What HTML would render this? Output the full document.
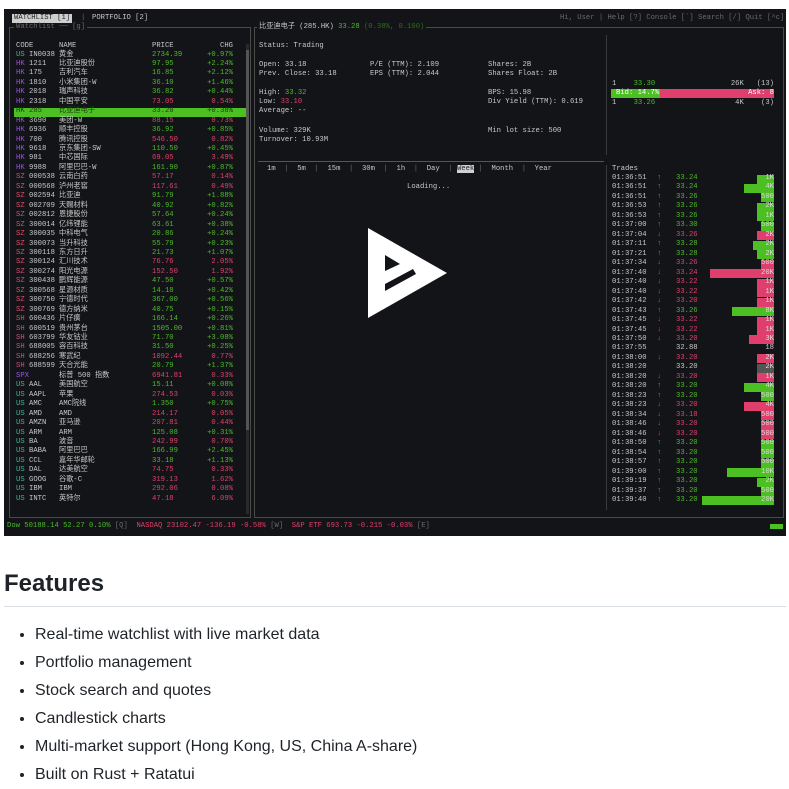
<!DOCTYPE html>
<html><head><meta charset="utf-8"><style>
*{margin:0;padding:0;box-sizing:border-box}
body{width:789px;height:788px;background:#fff;position:relative;overflow:hidden;font-family:"Liberation Sans",sans-serif}
#t{position:absolute;left:4px;top:9px;width:782px;height:527px;background:#131417}
.a{position:absolute;white-space:pre;font-family:"Liberation Mono","Noto Sans CJK SC",monospace;font-size:7.2px;line-height:9px;color:#c9c9c9}
.g{color:#4cbb2a}.r{color:#e0406a}.d{color:#6a6a6a}
.us{color:#3ab79a}.hk{color:#9a52e6}.sz{color:#e04a6c}.sh{color:#d0507a}.spx{color:#9a52f0}
.bx{position:absolute;border:1px solid #4a4a4a}
.ln{position:absolute;background:#3a3a3a}
.rt{text-align:right}
</style></head><body>
<div id="t"></div>
<div class="a" style="left:12px;top:14px;background:#cfcfcf;color:#222;padding:0 2px">WATCHLIST [1]</div>
<div class="a d" style="left:81px;top:14px">|</div>
<div class="a" style="left:92px;top:14px">PORTFOLIO [2]</div>
<div class="a d" style="left:560px;top:14px;width:222px;text-align:right">Hi, User | Help [?] Console [`] Search [/] Quit [^c]</div>
<div class="bx" style="left:9px;top:27px;width:242px;height:491px"></div>
<div class="a d" style="left:14px;top:23px;background:#131417;padding:0 2px">Watchlist ── [g]</div>
<div class="ln" style="left:246px;top:44px;width:3px;height:470px;background:#2a2a2a"></div>
<div class="ln" style="left:246px;top:50px;width:3px;height:380px;background:#555"></div>
<div class="a" style="left:16px;top:42px">CODE</div><div class="a" style="left:59px;top:42px">NAME</div><div class="a" style="left:152px;top:42px">PRICE</div><div class="a rt" style="left:190px;top:42px;width:43px">CHG</div>
<div style="position:absolute;left:14px;top:108px;width:232px;height:9px;background:#4cbf22"></div>
<div id="wl"></div>
<div class="bx" style="left:254px;top:27px;width:530px;height:491px"></div>
<div class="a" style="left:257px;top:23px;background:#131417;padding:0 2px">比亚迪电子 (285.HK) <span class="g">33.28</span> <span style="color:#2f6e1c">(0.38%, 0.100)</span></div>
<div class="ln" style="left:606px;top:35px;width:1px;height:120px"></div>
<div class="ln" style="left:606px;top:165px;width:1px;height:345px"></div>
<div class="ln" style="left:258px;top:161px;width:346px;height:1px;background:#555"></div>
<div class="a" style="left:259px;top:42px">Status: Trading</div>
<div class="a" style="left:259px;top:61px">Open: 33.18<br>Prev. Close: 33.18</div>
<div class="a" style="left:370px;top:61px">P/E (TTM): 2.109<br>EPS (TTM): 2.044</div>
<div class="a" style="left:488px;top:61px">Shares: 2B<br>Shares Float: 2B</div>
<div class="a" style="left:259px;top:89px">High: <span class="g">33.32</span><br>Low: <span class="r">33.10</span><br>Average: --</div>
<div class="a" style="left:488px;top:89px">BPS: 15.98<br>Div Yield (TTM): 0.619</div>
<div class="a" style="left:259px;top:127px">Volume: 329K<br>Turnover: 10.93M</div>
<div class="a" style="left:488px;top:127px">Min lot size: 500</div>
<div class="a" style="left:612px;top:80px">1    <span class="g">33.30</span></div><div class="a rt" style="left:700px;top:80px;width:74px">26K   (13)</div>
<div style="position:absolute;left:611px;top:89px;width:49px;height:9px;background:#4cbf22"></div>
<div style="position:absolute;left:660px;top:89px;width:114px;height:9px;background:#e03e6c"></div>
<div class="a" style="left:616px;top:89px;color:#fff">Bid: 14.7%</div><div class="a rt" style="left:700px;top:89px;width:74px;color:#fff">Ask: 8</div>
<div class="a" style="left:612px;top:99px">1    <span class="g">33.26</span></div><div class="a rt" style="left:700px;top:99px;width:74px">4K    (3)</div>
<div class="a" style="left:267px;top:165px">1m  <span class="d">|</span>  5m  <span class="d">|</span>  15m  <span class="d">|</span>  30m  <span class="d">|</span>  1h  <span class="d">|</span>  Day  <span class="d">|</span> <span style="background:#d0d0d0;color:#222">Week</span> <span class="d">|</span>  Month  <span class="d">|</span>  Year</div>
<div class="a" style="left:407px;top:183px">Loading...</div>
<svg style="position:absolute;left:0;top:0" width="789" height="540"><path d="M368 228 L447 273 L368 318 Z" fill="#fff"/><path d="M385 255 L400 264 L385 271 Z" fill="#131417"/><path d="M385 284 L413 269 L416 274 L385 291 Z" fill="#131417"/></svg>
<div class="a" style="left:612px;top:165px">Trades</div>
<div id="tr"></div>
<div class="a" style="left:7px;top:522px"><span class="g">Dow 50188.14 52.27 0.10%</span> <span class="d">[Q]</span>  <span class="r">NASDAQ 23102.47 -136.19 -0.58%</span> <span class="d">[W]</span>  <span class="r">S&amp;P ETF 693.73 -0.215 -0.03%</span> <span class="d">[E]</span></div>
<div style="position:absolute;left:770px;top:524px;width:13px;height:5px;background:#4cbf22"></div>
<div style="position:absolute;left:4px;top:570px;font-size:24px;font-weight:bold;color:#1f2328">Features</div>
<div style="position:absolute;left:4px;top:606px;width:782px;height:1px;background:#d8dee4"></div>
<ul style="position:absolute;left:35px;top:621px;font-size:16px;line-height:28px;color:#1f2328;list-style:disc;padding-left:0">
<li>Real-time watchlist with live market data</li>
<li>Portfolio management</li>
<li>Stock search and quotes</li>
<li>Candlestick charts</li>
<li>Multi-market support (Hong Kong, US, China A-share)</li>
<li>Built on Rust + Ratatui</li>
</ul>
<script>
var W=[["us","US","IN0038","黄金","2734.39","+0.97%",1],["hk","HK","1211","比亚迪股份","97.95","+2.24%",1],["hk","HK","175","吉利汽车","16.85","+2.12%",1],["hk","HK","1810","小米集团-W","36.10","+1.46%",1],["hk","HK","2018","瑞声科技","36.82","+0.44%",1],["hk","HK","2318","中国平安","73.05","0.54%",0],["hk","HK","285","比亚迪电子","33.28","+0.38%",2],["hk","HK","3690","美团-W","88.15","0.73%",0],["hk","HK","6936","顺丰控股","36.92","+0.85%",1],["hk","HK","700","腾讯控股","546.50","0.82%",0],["hk","HK","9618","京东集团-SW","110.50","+0.45%",1],["hk","HK","981","中芯国际","69.05","3.49%",0],["hk","HK","9988","阿里巴巴-W","161.90","+0.87%",1],["sz","SZ","000538","云南白药","57.17","0.14%",0],["sz","SZ","000568","泸州老窖","117.61","0.49%",0],["sz","SZ","002594","比亚迪","91.79","+1.88%",1],["sz","SZ","002709","天赐材料","40.92","+0.82%",1],["sz","SZ","002812","恩捷股份","57.64","+0.24%",1],["sz","SZ","300014","亿纬锂能","63.61","+0.38%",1],["sz","SZ","300035","中科电气","20.86","+0.24%",1],["sz","SZ","300073","当升科技","55.79","+0.23%",1],["sz","SZ","300118","东方日升","21.73","+1.07%",1],["sz","SZ","300124","汇川技术","76.76","2.05%",0],["sz","SZ","300274","阳光电源","152.50","1.92%",0],["sz","SZ","300438","鹏辉能源","47.50","+0.57%",1],["sz","SZ","300568","星源材质","14.18","+0.42%",1],["sz","SZ","300750","宁德时代","367.00","+0.56%",1],["sz","SZ","300769","德方纳米","40.75","+0.15%",1],["sh","SH","600436","片仔癀","166.14","+0.26%",1],["sh","SH","600519","贵州茅台","1505.00","+0.81%",1],["sh","SH","603799","华友钴业","71.70","+3.08%",1],["sh","SH","688005","容百科技","31.50","+0.25%",1],["sh","SH","688256","寒武纪","1092.44","0.77%",0],["sh","SH","688599","天合光能","20.79","+1.37%",1],["spx","SPX","","标普 500 指数","6941.81","0.33%",0],["us","US","AAL","美国航空","15.11","+0.08%",1],["us","US","AAPL","苹果","274.53","0.03%",0],["us","US","AMC","AMC院线","1.350","+0.75%",1],["us","US","AMD","AMD","214.17","0.05%",0],["us","US","AMZN","亚马逊","207.81","0.44%",0],["us","US","ARM","ARM","125.08","+0.31%",1],["us","US","BA","波音","242.99","0.70%",0],["us","US","BABA","阿里巴巴","166.99","+2.45%",1],["us","US","CCL","嘉年华邮轮","33.18","+1.13%",1],["us","US","DAL","达美航空","74.75","0.33%",0],["us","US","GOOG","谷歌-C","319.13","1.62%",0],["us","US","IBM","IBM","292.06","0.08%",0],["us","US","INTC","英特尔","47.18","6.09%",0]];
var h="";W.forEach(function(r,i){var y=(50.5+i*9.45).toFixed(2);var c=r[6]==1?"g":r[6]==0?"r":"";var hl=r[6]==2?";color:#1a3a10":"";
h+='<div class="a '+(r[6]==2?"":r[0])+'" style="left:16px;top:'+y+'px'+hl+'">'+r[1]+'</div><div class="a" style="left:29px;top:'+y+'px'+hl+'">'+r[2]+'</div><div class="a" style="left:59px;top:'+y+'px'+hl+'">'+r[3]+'</div><div class="a '+c+'" style="left:152px;top:'+y+'px'+hl+'">'+r[4]+'</div><div class="a rt '+c+'" style="left:180px;top:'+y+'px;width:53px'+hl+'">'+r[5]+'</div>';});
document.getElementById("wl").innerHTML=h;
var T=[["36:51","u","33.24","1K",17],["36:51","u","33.24","4K",30],["36:51","u","33.26","500",13],["36:53","u","33.26","2K",17],["36:53","u","33.26","1K",17],["37:00","u","33.30","500",13],["37:04","d","33.26","2K",17],["37:11","u","33.28","2K",21],["37:21","u","33.28","2K",17],["37:34","d","33.26","500",13],["37:40","d","33.24","20K",64],["37:40","d","33.22","1K",17],["37:40","d","33.22","1K",17],["37:42","d","33.20","1K",17],["37:43","u","33.26","8K",42],["37:45","d","33.22","1K",17],["37:45","d","33.22","1K",17],["37:50","d","33.20","3K",25],["37:55","n","32.88","18",0],["38:00","d","33.20","2K",17],["38:20","n","33.20","2K",17],["38:20","d","33.20","1K",17],["38:20","u","33.20","4K",30],["38:23","u","33.20","500",13],["38:23","d","33.20","4K",30],["38:34","d","33.18","500",13],["38:46","d","33.20","500",13],["38:46","d","33.20","500",13],["38:50","u","33.20","500",13],["38:54","u","33.20","500",13],["38:57","u","33.20","500",13],["39:00","u","33.20","10K",47],["39:19","u","33.20","2K",17],["39:37","u","33.20","500",13],["39:40","u","33.20","20K",72]];
h="";T.forEach(function(r,i){var y=174+i*9.47;var c=r[1]=="u"?"g":r[1]=="d"?"r":"";var bg=r[1]=="u"?"#4cbf22":r[1]=="d"?"#e03e6c":"#555";var ar=r[1]=="u"?"↑":r[1]=="d"?"↓":"";
if(r[4])h+='<div style="position:absolute;left:'+(774-r[4])+'px;top:'+(y+0.5)+'px;width:'+r[4]+'px;height:9px;background:'+bg+'"></div>';
h+='<div class="a" style="left:612px;top:'+y+'px">01:'+r[0]+'</div><div class="a '+c+'" style="left:657px;top:'+y+'px">'+ar+'</div><div class="a '+c+'" style="left:676px;top:'+y+'px">'+r[2]+'</div><div class="a rt" style="left:740px;top:'+y+'px;width:34px;color:'+(r[4]?"#ddd":"#ccc")+'">'+r[3]+'</div>';});
document.getElementById("tr").innerHTML=h;
</script>
</body></html>
